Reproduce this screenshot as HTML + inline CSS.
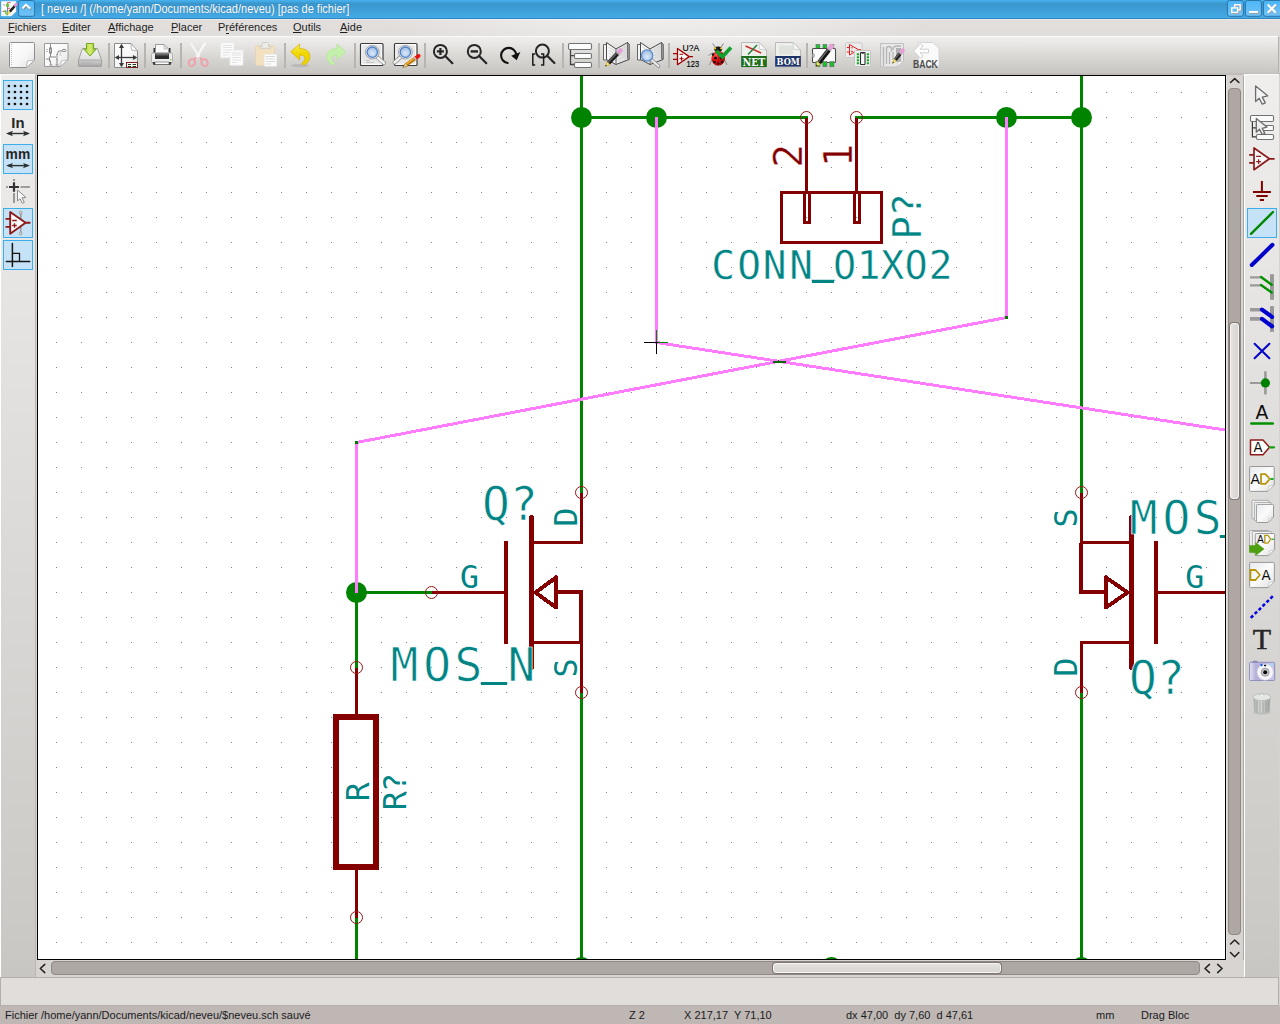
<!DOCTYPE html>
<html><head><meta charset="utf-8"><title>neveu - Eeschema</title>
<style>
html,body{margin:0;padding:0;}
body{width:1280px;height:1024px;overflow:hidden;position:relative;background:#d6d2cf;font-family:"Liberation Sans",sans-serif;font-size:11px;color:#1b1b1b;}
.abs{position:absolute;}
#title{left:0;top:0;width:1280px;height:19px;background:linear-gradient(#48b2f0 0,#42a8e2 1.5px,#3a97cd 3.5px,#3b98cf 5px,#44a9e5 17.5px,#44a9e5 18px,#2a88c4 18px,#2a88c4 19px);}
#title .txt{position:absolute;left:41px;top:2px;font-size:12px;color:#fff;white-space:nowrap;line-height:14px;text-shadow:0 0 1px rgba(30,80,120,.6);transform:scaleX(0.917);transform-origin:0 0;}
#menu{left:0;top:19px;width:1280px;height:17px;background:radial-gradient(ellipse 290px 50px at 655px -9px,rgba(255,255,255,.52) 0,rgba(255,255,255,.4) 40%,rgba(255,255,255,0) 100%),linear-gradient(#efe7e3 0,#efe7e3 1px,#e1dedc 1px,#e0dddb 100%);}
#menu span{position:absolute;top:2px;font-size:11px;line-height:13px;color:#1d1d1d;white-space:nowrap;}
#menu span.fl::first-letter{text-decoration:underline;text-underline-offset:1px;}
#tb{left:0;top:36px;width:1279px;height:37px;border-right:1px solid #b4b1ae;border-top:1px solid #fafaf9;box-sizing:border-box;background:linear-gradient(#efeeec 0,#ebeae8 4px,#d9d7d4 20px,#c8c6c3 36px);}
#tbline{left:0;top:73px;width:1280px;height:2px;background:#bfbcb9;}
#ltb{left:0;top:74px;width:36px;height:903px;border-top:1px solid #fbfbfa;border-right:1px solid #b9b6b3;background:linear-gradient(#efeeec 0,#e3e1df 300px,#cbc9c6 860px,#c8c6c3 100%);border-left:1px solid #fff;box-sizing:border-box;}
#rtb{left:1244px;top:74px;width:35px;height:903px;border-top:1px solid #fbfbfa;background:linear-gradient(#efeeec 0,#e3e1df 300px,#cbc9c6 860px,#c8c6c3 100%);border-left:1px solid #fff;box-sizing:border-box;}
#canvas{left:37px;top:75px;width:1187px;height:883px;border:1px solid #000;background:#fff;}
#vsb{left:1226px;top:76px;width:18px;height:884px;background:#d8d4d1;border-right:1px solid #aaa7a4;border-left:1px solid #e4e0dd;box-sizing:border-box;}
#hsb{left:38px;top:960px;width:1206px;height:17px;background:#d8d4d1;}
.groove{position:absolute;background:#afa7a3;border:1px solid #8f8884;border-radius:4px;box-sizing:border-box;}
.handle{position:absolute;background:linear-gradient(90deg,#e4e1de,#d8d4d1);border:1px solid #f6f5f4;border-radius:3px;box-sizing:border-box;box-shadow:0 0 0 1px #7d7773;}
#msg{left:0;top:977px;width:1279px;height:29px;background:#e0dddb;border:1px solid #b3afac;box-sizing:border-box;}
#status{left:0;top:1006px;width:1280px;height:18px;background:#beb7b3;}
#status span{position:absolute;top:3px;font-size:11px;line-height:13px;color:#1a1a22;white-space:nowrap;}
</style></head><body>
<div id="title" class="abs"><div class="txt">[ neveu /] (/home/yann/Documents/kicad/neveu) [pas de fichier]</div></div>
<div id="menu" class="abs">
<span class="fl" style="left:8px">Fichiers</span>
<span class="fl" style="left:62px">Editer</span>
<span class="fl" style="left:108px">Affichage</span>
<span class="fl" style="left:171px">Placer</span>
<span style="left:218px">Préférences</span><i style="position:absolute;left:225.5px;top:13.5px;width:3.6px;height:1px;background:#1d1d1d"></i>
<span class="fl" style="left:293px">Outils</span>
<span class="fl" style="left:340px">Aide</span>
</div>
<div id="tb" class="abs"></div>
<div id="tbline" class="abs"></div>
<div id="ltb" class="abs"></div>
<div id="rtb" class="abs"></div>
<div id="canvas" class="abs"></div>
<div id="vsb" class="abs">
 <div class="groove" style="left:1px;top:12px;width:13px;height:847px"></div>
 <div class="handle" style="left:3px;top:247px;width:9px;height:176px"></div>
</div>
<div id="hsb" class="abs">
 <div class="groove" style="left:13px;top:1px;width:1149px;height:14px"></div>
 <div class="handle" style="left:735px;top:3px;width:228px;height:10px;background:linear-gradient(#e4e1de,#d8d4d1)"></div>
</div>
<div id="msg" class="abs"></div>
<div id="status" class="abs">
<span style="left:5px">Fichier /home/yann/Documents/kicad/neveu/$neveu.sch sauvé</span>
<span style="left:629px">Z 2</span>
<span style="left:684px">X 217,17&nbsp; Y 71,10</span>
<span style="left:846px">dx 47,00&nbsp; dy 7,60&nbsp; d 47,61</span>
<span style="left:1096px">mm</span>
<span style="left:1141px">Drag Bloc</span>
</div>
<svg class="abs" style="left:38px;top:76px" width="1187" height="883" viewBox="38 76 1187 883">
<defs><pattern id="grid" x="6" y="17" width="25" height="25" patternUnits="userSpaceOnUse"><rect x="0" y="0" width="1" height="1" fill="#848484"/></pattern></defs>
<rect x="38" y="76" width="1187" height="883" fill="url(#grid)"/>
<g transform="translate(0.5,0.5)" fill="none" stroke-linecap="butt" shape-rendering="crispEdges">
<line x1="581" y1="70" x2="581" y2="492" stroke="#008400" stroke-width="3" stroke-linecap="butt" />
<line x1="581" y1="692" x2="581" y2="965" stroke="#008400" stroke-width="3" stroke-linecap="butt" />
<line x1="1081" y1="70" x2="1081" y2="492" stroke="#008400" stroke-width="3" stroke-linecap="butt" />
<line x1="1081" y1="692" x2="1081" y2="965" stroke="#008400" stroke-width="3" stroke-linecap="butt" />
<line x1="581" y1="117" x2="807.5" y2="117" stroke="#008400" stroke-width="3" stroke-linecap="butt" />
<line x1="854.5" y1="117" x2="1081" y2="117" stroke="#008400" stroke-width="3" stroke-linecap="butt" />
<line x1="356" y1="592" x2="431" y2="592" stroke="#008400" stroke-width="3" stroke-linecap="butt" />
<line x1="356" y1="592" x2="356" y2="667" stroke="#008400" stroke-width="3" stroke-linecap="butt" />
<line x1="356" y1="917" x2="356" y2="965" stroke="#008400" stroke-width="3" stroke-linecap="butt" />
<circle cx="581" cy="117" r="10.5" fill="#008400" stroke="none" shape-rendering="auto"/>
<circle cx="656" cy="117" r="10.5" fill="#008400" stroke="none" shape-rendering="auto"/>
<circle cx="1006" cy="117" r="10.5" fill="#008400" stroke="none" shape-rendering="auto"/>
<circle cx="1081" cy="117" r="10.5" fill="#008400" stroke="none" shape-rendering="auto"/>
<circle cx="356" cy="592" r="10.5" fill="#008400" stroke="none" shape-rendering="auto"/>
<circle cx="831" cy="967" r="10.5" fill="#008400" stroke="none" shape-rendering="auto"/>
<circle cx="581" cy="967" r="10.5" fill="#008400" stroke="none" shape-rendering="auto"/>
<circle cx="1081" cy="967" r="10.5" fill="#008400" stroke="none" shape-rendering="auto"/>
<line x1="806" y1="117" x2="806" y2="192" stroke="#840000" stroke-width="3" stroke-linecap="butt" />
<line x1="856" y1="117" x2="856" y2="192" stroke="#840000" stroke-width="3" stroke-linecap="butt" />
<rect x="781" y="192" width="100" height="50" stroke="#840000" stroke-width="3"/>
<rect x="804" y="192" width="5" height="30" stroke="#840000" stroke-width="3"/>
<rect x="854" y="192" width="5" height="30" stroke="#840000" stroke-width="3"/>
<circle cx="806" cy="117" r="6" stroke="#961414" stroke-width="1" shape-rendering="auto"/>
<circle cx="856" cy="117" r="6" stroke="#961414" stroke-width="1" shape-rendering="auto"/>
<line x1="531" y1="517" x2="531" y2="667" stroke="#840000" stroke-width="5" stroke-linecap="round" />
<line x1="505.5" y1="542" x2="505.5" y2="642" stroke="#840000" stroke-width="4" stroke-linecap="round" />
<line x1="506" y1="592" x2="431" y2="592" stroke="#840000" stroke-width="3" stroke-linecap="butt" />
<path d="M581 492 L581 542 L531 542" stroke="#840000" stroke-width="3" stroke-linejoin="miter" stroke-linecap="butt"/>
<path d="M531 642 L581 642 L581 692" stroke="#840000" stroke-width="3" stroke-linejoin="miter" stroke-linecap="butt"/>
<circle cx="581" cy="492" r="6" stroke="#961414" stroke-width="1" shape-rendering="auto"/>
<circle cx="581" cy="692" r="6" stroke="#961414" stroke-width="1" shape-rendering="auto"/>
<line x1="556" y1="591.5" x2="582.5" y2="591.5" stroke="#840000" stroke-width="4" stroke-linecap="butt" />
<line x1="580.5" y1="589.5" x2="580.5" y2="642" stroke="#840000" stroke-width="4" stroke-linecap="butt" />
<path d="M535 592 L555.5 577 L555.5 607 Z" stroke="#840000" stroke-width="4" stroke-linejoin="round" stroke-linecap="butt"/>
<circle cx="431" cy="592" r="6" stroke="#961414" stroke-width="1" shape-rendering="auto"/>
<line x1="1131" y1="517" x2="1131" y2="667" stroke="#840000" stroke-width="5" stroke-linecap="round" />
<line x1="1155.5" y1="542" x2="1155.5" y2="642" stroke="#840000" stroke-width="4" stroke-linecap="round" />
<line x1="1156" y1="592" x2="1240" y2="592" stroke="#840000" stroke-width="3" stroke-linecap="butt" />
<path d="M1081 492 L1081 542 L1131 542" stroke="#840000" stroke-width="3" stroke-linejoin="miter" stroke-linecap="butt"/>
<path d="M1131 642 L1081 642 L1081 692" stroke="#840000" stroke-width="3" stroke-linejoin="miter" stroke-linecap="butt"/>
<circle cx="1081" cy="492" r="6" stroke="#961414" stroke-width="1" shape-rendering="auto"/>
<circle cx="1081" cy="692" r="6" stroke="#961414" stroke-width="1" shape-rendering="auto"/>
<line x1="1106" y1="591.5" x2="1078.5" y2="591.5" stroke="#840000" stroke-width="4" stroke-linecap="butt" />
<line x1="1080.5" y1="593.5" x2="1080.5" y2="542" stroke="#840000" stroke-width="4" stroke-linecap="butt" />
<path d="M1127 592 L1105.5 577 L1105.5 607 Z" stroke="#840000" stroke-width="4" stroke-linejoin="round" stroke-linecap="butt"/>
<line x1="356" y1="667" x2="356" y2="717" stroke="#840000" stroke-width="3" stroke-linecap="butt" />
<line x1="356" y1="867" x2="356" y2="917" stroke="#840000" stroke-width="3" stroke-linecap="butt" />
<rect x="335.5" y="716.5" width="40" height="150" stroke="#840000" stroke-width="6"/>
<circle cx="356" cy="667" r="6" stroke="#961414" stroke-width="1" shape-rendering="auto"/>
<circle cx="356" cy="917" r="6" stroke="#961414" stroke-width="1" shape-rendering="auto"/>
<path d="M656 116 L656 342 L1306 442" stroke="#ff7bff" stroke-width="3" stroke-linejoin="miter" stroke-linecap="butt"/>
<path d="M1006 116 L1006 317 L356 442 L356 592" stroke="#ff7bff" stroke-width="3" stroke-linejoin="miter" stroke-linecap="butt"/>
<rect x="354.5" y="440.5" width="3" height="3" fill="#007c00" stroke="none"/>
<rect x="1004.5" y="315.5" width="3" height="3" fill="#007c00" stroke="none"/>
<line x1="772" y1="361" x2="785" y2="361" stroke="#0a6a0a" stroke-width="2" stroke-linecap="butt" />
<line x1="778" y1="359.5" x2="778" y2="362.5" stroke="#0a6a0a" stroke-width="1" stroke-linecap="butt" />
<line x1="643.5" y1="342" x2="667.5" y2="342" stroke="#000" stroke-width="1" stroke-linecap="butt" />
<line x1="656" y1="329.5" x2="656" y2="353.5" stroke="#000" stroke-width="1" stroke-linecap="butt" />
<line x1="656" y1="329.5" x2="656" y2="341" stroke="#008400" stroke-width="1" stroke-linecap="butt" />
<line x1="657" y1="342" x2="667.5" y2="342" stroke="#008400" stroke-width="1" stroke-linecap="butt" />
</g>
<text x="723 749 774.6 801 823 844.7 868.6 892.4 916 940.5" y="278.8 278.8 278.8 278.8 272.3 278.8 278.8 278.8 278.8 278.8" font-family="'DejaVu Sans Mono','Liberation Mono',monospace" font-size="39.4" fill="#008484" stroke="#fff" stroke-width="0.4" paint-order="fill" text-anchor="middle">CONN_01X02</text>
<text transform="translate(921.3,0) rotate(-90)" x="-227.8 -205" y="0 0" font-family="'DejaVu Sans Mono','Liberation Mono',monospace" font-size="39.4" fill="#008484" stroke="#fff" stroke-width="0.4" paint-order="fill" text-anchor="middle">P?</text>
<text transform="translate(802.3,0) rotate(-90)" x="-156" y="0" font-family="'DejaVu Sans Mono','Liberation Mono',monospace" font-size="39.4" fill="#840000" stroke="#fff" stroke-width="0.4" paint-order="fill" text-anchor="middle">2</text>
<text transform="translate(852.3,0) rotate(-90)" x="-155.5" y="0" font-family="'DejaVu Sans Mono','Liberation Mono',monospace" font-size="39.4" fill="#840000" stroke="#fff" stroke-width="0.4" paint-order="fill" text-anchor="middle">1</text>
<text x="496 524" y="520.4 520.4" font-family="'DejaVu Sans Mono','Liberation Mono',monospace" font-size="46.1" fill="#008484" stroke="#fff" stroke-width="0.7" paint-order="fill" text-anchor="middle">Q?</text>
<text x="404.4 437.2 468.4 494 521.4" y="681.4 681.4 681.4 672.9 681.4" font-family="'DejaVu Sans Mono','Liberation Mono',monospace" font-size="46.1" fill="#008484" stroke="#fff" stroke-width="0.7" paint-order="fill" text-anchor="middle">MOS_N</text>
<text x="469.5" y="587.5" font-family="'DejaVu Sans Mono','Liberation Mono',monospace" font-size="31.5" fill="#008484" text-anchor="middle">G</text>
<text transform="translate(577,0) rotate(-90)" x="-517" y="0" font-family="'DejaVu Sans Mono','Liberation Mono',monospace" font-size="31.5" fill="#008484" text-anchor="middle">D</text>
<text transform="translate(577,0) rotate(-90)" x="-668" y="0" font-family="'DejaVu Sans Mono','Liberation Mono',monospace" font-size="31.5" fill="#008484" text-anchor="middle">S</text>
<text x="1143.6 1176.4 1207.6 1233 1260.6" y="534.4 534.4 534.4 526.4 534.4" font-family="'DejaVu Sans Mono','Liberation Mono',monospace" font-size="46.1" fill="#008484" stroke="#fff" stroke-width="0.7" paint-order="fill" text-anchor="middle">MOS_N</text>
<text x="1143 1171" y="694.4 694.4" font-family="'DejaVu Sans Mono','Liberation Mono',monospace" font-size="46.1" fill="#008484" stroke="#fff" stroke-width="0.7" paint-order="fill" text-anchor="middle">Q?</text>
<text x="1194.75" y="587.5" font-family="'DejaVu Sans Mono','Liberation Mono',monospace" font-size="31.5" fill="#008484" text-anchor="middle">G</text>
<text transform="translate(1077,0) rotate(-90)" x="-518" y="0" font-family="'DejaVu Sans Mono','Liberation Mono',monospace" font-size="31.5" fill="#008484" text-anchor="middle">S</text>
<text transform="translate(1077,0) rotate(-90)" x="-667" y="0" font-family="'DejaVu Sans Mono','Liberation Mono',monospace" font-size="31.5" fill="#008484" text-anchor="middle">D</text>
<text transform="translate(369,0) rotate(-90)" x="-791.75" y="0" font-family="'DejaVu Sans Mono','Liberation Mono',monospace" font-size="31.5" fill="#008484" text-anchor="middle">R</text>
<text transform="translate(406,0) rotate(-90)" x="-800.75 -782.4" y="0 0" font-family="'DejaVu Sans Mono','Liberation Mono',monospace" font-size="31.5" fill="#008484" text-anchor="middle">R?</text>
<g shape-rendering="crispEdges" stroke="#008484" stroke-width="3"><line x1="812" y1="281" x2="834" y2="281"/><line x1="481" y1="683" x2="507" y2="683"/><line x1="1220" y1="536" x2="1246" y2="536"/></g>
<ellipse cx="844.7" cy="264.8" rx="3.6" ry="8" fill="#fff"/><ellipse cx="916" cy="264.8" rx="3.6" ry="8" fill="#fff"/>
</svg>
<svg class="abs" style="left:0;top:36px" width="1280" height="38" viewBox="0 36 1280 38">
<defs>
<linearGradient id="pg" x1="0" y1="0" x2="1" y2="1"><stop offset="0" stop-color="#ffffff"/><stop offset="0.6" stop-color="#f6f6f6"/><stop offset="1" stop-color="#dcdcdc"/></linearGradient>
<linearGradient id="arrg" x1="0" y1="0" x2="1" y2="0"><stop offset="0" stop-color="#9ccc3a"/><stop offset="0.5" stop-color="#dcec70"/><stop offset="1" stop-color="#8cc030"/></linearGradient>
<linearGradient id="drv" x1="0" y1="0" x2="0" y2="1"><stop offset="0" stop-color="#f4f4f4"/><stop offset="1" stop-color="#d4d4d4"/></linearGradient>
<linearGradient id="drvf" x1="0" y1="0" x2="0" y2="1"><stop offset="0" stop-color="#d0d0d0"/><stop offset="1" stop-color="#a8a8a8"/></linearGradient>
<radialGradient id="lens" cx="0.5" cy="0.6" r="0.6"><stop offset="0" stop-color="#dce8f6"/><stop offset="1" stop-color="#9cbce4"/></radialGradient>
<linearGradient id="yel" x1="0" y1="0" x2="0" y2="1"><stop offset="0" stop-color="#f8ec60"/><stop offset="0.45" stop-color="#f0d800"/><stop offset="1" stop-color="#ecd000"/></linearGradient>
<radialGradient id="bug" cx="0.35" cy="0.3" r="0.8"><stop offset="0" stop-color="#ff5a50"/><stop offset="0.5" stop-color="#e01010"/><stop offset="1" stop-color="#a00000"/></radialGradient>
<linearGradient id="book" x1="0" y1="0" x2="1" y2="0"><stop offset="0" stop-color="#fafafa"/><stop offset="1" stop-color="#d8d8d8"/></linearGradient>
</defs>
<rect x="108" y="43" width="2" height="25" fill="#b7b4b1"/>
<rect x="144" y="43" width="2" height="25" fill="#b7b4b1"/>
<rect x="180" y="43" width="2" height="25" fill="#b7b4b1"/>
<rect x="284" y="43" width="2" height="25" fill="#b7b4b1"/>
<rect x="354" y="43" width="2" height="25" fill="#b7b4b1"/>
<rect x="424" y="43" width="2" height="25" fill="#b7b4b1"/>
<rect x="562" y="43" width="2" height="25" fill="#b7b4b1"/>
<rect x="598" y="43" width="2" height="25" fill="#b7b4b1"/>
<rect x="668" y="43" width="2" height="25" fill="#b7b4b1"/>
<rect x="806" y="43" width="2" height="25" fill="#b7b4b1"/>
<path d="M10.5 42.5 H33.5 Q34.5 42.5 34.5 43.5 V60 L26.5 67.5 H10.5 Q9.5 67.5 9.5 66.5 V43.5 Q9.5 42.5 10.5 42.5 Z" fill="url(#pg)" stroke="#8e8e8e" stroke-width="1"/>
<path d="M34.5 60 L26.5 67.5 L27.5 61 Z" fill="#fff" stroke="#a8a8a8" stroke-width="0.8"/>
<line x1="11.5" y1="44" x2="11.5" y2="66" stroke="#c4c4c4" stroke-width="1" stroke-dasharray="1 1"/>
<path d="M44.5 43.5 H68 V60 L60 66.5 H44.5 Z" fill="url(#pg)" stroke="#9a9a9a" stroke-width="1"/>
<path d="M68 60 L60 66.5 L61.5 61 Z" fill="#fff" stroke="#b0b0b0" stroke-width="0.8"/>
<g stroke="#8a8a8a" stroke-width="1" fill="none"><path d="M50.5 44 V48 M50.5 53 V57 M50.5 57 H56 M57 54 V60 M57 55 L58.5 51 H62 M57 59 V65 M55.5 65 H58.5 M46 59 H49 M49.5 56.5 V61.5 M50 60 L51 65 M49.5 65 H52.5"/><rect x="49.5" y="48" width="2" height="5" fill="#c8c8c8"/><ellipse cx="64" cy="50.5" rx="2" ry="1.2" fill="#eee"/><path d="M46 49.5 H48 M46 51.5 H48 M59.5 53 H61.5 M59.5 55 H61.5" stroke="#b8b8b8"/></g>
<path d="M82.5 48.5 H97.5 L101.5 60 V66 H78.5 V60 Z" fill="url(#drv)" stroke="#a0a0a0" stroke-width="1"/>
<rect x="78.5" y="60" width="23" height="6.3" rx="1" fill="url(#drvf)" stroke="#9a9a9a" stroke-width="0.8"/>
<rect x="81" y="62" width="12" height="2" fill="#b8b8b8"/>
<path d="M86.5 43.5 H93.5 V49 H96.3 L90 56 L83.7 49 H86.5 Z" fill="url(#arrg)" stroke="#6ea820" stroke-width="1" stroke-linejoin="round"/>
<path d="M114.5 43.5 H131 L137.5 51 V67.5 H114.5 Z" fill="url(#pg)" stroke="#8a8a8a" stroke-width="1"/>
<path d="M131 43.5 L137.5 51 L131.5 50 Z" fill="#fff" stroke="#a8a8a8" stroke-width="0.8"/>
<g stroke="#3a3a3a" stroke-width="1.3" fill="#3a3a3a"><line x1="121.5" y1="45" x2="121.5" y2="66"/><line x1="116" y1="57.5" x2="136" y2="57.5"/></g>
<g fill="#3a3a3a"><path d="M121.5 43.8 L119 48 H124 Z"/><path d="M121.5 67.2 L119 63 H124 Z"/><path d="M114.8 57.5 L119 55 V60 Z"/><path d="M137.2 57.5 L133 55 V60 Z"/></g>
<rect x="126.5" y="62.5" width="11" height="5" fill="#fff" stroke="#7a2020" stroke-width="1"/><path d="M128 64.5 H131 M132.500 64.5 H136 M128 66.5 H131 M132.5 66.5 H136" stroke="#1a3a1a" stroke-width="1"/>
<path d="M155.500 53 V44.500 H164 L168.500 49 V53 Z" fill="#f8f8f8" stroke="#9a9a9a" stroke-width="1"/>
<path d="M164 44.500 L168.500 49 H164 Z" fill="#e4e4e4" stroke="#a8a8a8" stroke-width="0.6"/>
<rect x="153.5" y="48" width="1.500" height="5" fill="#333"/><rect x="169" y="48" width="1.500" height="5" fill="#333"/>
<rect x="151.5" y="53" width="21" height="10" rx="1.500" fill="#ececec" stroke="#b0b0b0" stroke-width="1"/>
<rect x="155" y="53.5" width="14" height="5.500" fill="#2c2c2c"/><rect x="155.5" y="54" width="13" height="1.500" fill="#666"/>
<path d="M152.500 62 H171.500 L170.5 65 H153.5 Z" fill="#3a3a3a"/><rect x="155" y="62" width="14" height="2.500" fill="#fafafa" stroke="#555" stroke-width="0.6"/>
<rect x="170" y="59" width="1.200" height="1.200" fill="#70d030"/>
<g opacity="0.95"><path d="M191 43.500 L199.500 57" stroke="#f4f4f4" stroke-width="2.600" stroke-linecap="round"/><path d="M205 43.500 L196.500 57" stroke="#f8f8f8" stroke-width="2.600" stroke-linecap="round"/>
<path d="M196.300 57 L194 60" stroke="#f0a0a8" stroke-width="2"/><path d="M199.700 57 L202 60" stroke="#f0a0a8" stroke-width="2"/>
<ellipse cx="191.800" cy="62.600" rx="3" ry="3.600" transform="rotate(35 191.800 62.600)" fill="none" stroke="#f0a0a8" stroke-width="2"/><ellipse cx="204.500" cy="62.600" rx="3" ry="3.600" transform="rotate(-35 204.500 62.600)" fill="none" stroke="#f0a0a8" stroke-width="2"/></g>
<g><rect x="220.800" y="42.800" width="13.200" height="15" fill="#fbfbfb" stroke="#e9e9e9" stroke-width="0.8"/><path d="M223 45.500 H232 M223 47.500 H232 M223 50 H232 M223 52.500 H232 M223 55 H228" stroke="#e2e2e2" stroke-width="1.200"/>
<rect x="230" y="50.200" width="13" height="15" fill="#fbfbfb" stroke="#eaeaea" stroke-width="0.8"/><path d="M232 53 H241 M232 55 H241 M232 57.500 H241 M232 60 H241 M232 62.500 H237" stroke="#e2e2e2" stroke-width="1.200"/></g>
<rect x="255.500" y="45.800" width="19" height="19.600" rx="1.500" fill="#f2e0c0" stroke="#e6d2ae" stroke-width="0.8"/>
<path d="M260 48.300 V46.500 H262 V43.500 Q262 42.500 263 42.500 H267.500 Q268.500 42.500 268.500 43.500 V46.500 H270.500 V48.300 Z" fill="#ececea" stroke="#c8c8c4" stroke-width="0.8"/>
<rect x="264.200" y="54.200" width="12.600" height="12" fill="#fcfcfc" stroke="#e6e6e6" stroke-width="0.6"/><path d="M265.500 56.500 H275 M265.500 59 H275 M265.500 61.500 H275 M265.500 64 H271" stroke="#d8d8d8" stroke-width="1.100"/>
<ellipse cx="300" cy="65.500" rx="9" ry="1.800" fill="#000" opacity="0.10"/>
<path d="M290.800 51.700 L299.600 44 V48.600 C306.500 48.600 309.800 52 309.800 56.500 C309.800 60.500 307 64 303.200 65 C302.200 64.500 301.800 63.500 302.200 62.800 C304 61.500 305 60 305 58.500 C305 56 303 55 299.600 55 V59.900 Z" fill="url(#yel)" stroke="#d8b400" stroke-width="0.8" stroke-linejoin="round"/>
<path d="M345.800 51.700 L337 44 V48.600 C330.100 48.600 326.800 52 326.800 56.500 C326.800 60.500 329.600 64 333.400 65 C334.400 64.500 334.800 63.500 334.400 62.800 C332.600 61.500 331.600 60 331.600 58.500 C331.600 56 333.600 55 337 55 V59.900 Z" fill="#c4f0ac" stroke="#b4e49c" stroke-width="0.8" stroke-linejoin="round"/>
<rect x="360.5" y="43.500" width="22.500" height="22" rx="1" fill="#fff" stroke="#3c3c3c" stroke-width="1.200"/><rect x="362.3" y="45.300" width="19" height="18.400" fill="#e6e6e6"/>
<path d="M366 60.500 H370 M366 62.500 H374" stroke="#b8b8b8" stroke-width="0.8"/>
<path d="M377 57 L384 63" stroke="#909090" stroke-width="4" stroke-linecap="round"/><path d="M377.500 57.500 L384 63" stroke="#f2f2f2" stroke-width="2.400" stroke-linecap="round"/>
<circle cx="372.300" cy="52.200" r="6.800" fill="#fafafa" stroke="#8a8a8a" stroke-width="0.8"/><circle cx="372.300" cy="52.200" r="5.200" fill="url(#lens)" stroke="#4a7ec8" stroke-width="1.300"/>
<rect x="394.5" y="43.500" width="22.500" height="22" rx="1" fill="#fff" stroke="#3c3c3c" stroke-width="1.200"/><rect x="396.3" y="45.300" width="19" height="18.400" fill="#e6e6e6"/>
<path d="M400.500 57 L394.500 62.500" stroke="#909090" stroke-width="4" stroke-linecap="round"/><path d="M400.200 57.300 L394.500 62.500" stroke="#f2f2f2" stroke-width="2.400" stroke-linecap="round"/>
<circle cx="405.400" cy="52.200" r="6.800" fill="#fafafa" stroke="#8a8a8a" stroke-width="0.8"/><circle cx="405.400" cy="52.200" r="5.200" fill="url(#lens)" stroke="#4a7ec8" stroke-width="1.300"/>
<path d="M418 56.500 L404.500 66" stroke="#b87810" stroke-width="3.400" stroke-linecap="butt"/><path d="M417.600 56 L404.300 65.300" stroke="#e8a830" stroke-width="1.600"/>
<path d="M418.800 55.800 L416 57.800" stroke="#e81010" stroke-width="3.600" stroke-linecap="round"/><path d="M415.800 58 L414.600 58.800" stroke="#c0c0c0" stroke-width="3.400"/>
<path d="M405.800 63.300 L402.600 67.600 L407.700 66.100 Z" fill="#e8d8a0" stroke="#a07820" stroke-width="0.5"/><path d="M402.600 67.600 L404 66.500 L403.400 66 Z" fill="#333"/>
<circle cx="440.4" cy="51.4" r="6.5" fill="none" stroke="#262626" stroke-width="2"/><path d="M445.2 56.0 L452.4 63.2" stroke="#262626" stroke-width="2.200" stroke-linecap="round"/>
<path d="M436.900 51.400 H443.900 M440.400 47.900 V54.900" stroke="#262626" stroke-width="2.200"/>
<circle cx="474.3" cy="51.4" r="6.5" fill="none" stroke="#262626" stroke-width="2"/><path d="M479.1 56.0 L486.3 63.2" stroke="#262626" stroke-width="2.200" stroke-linecap="round"/>
<path d="M470.600 51.400 H478 " stroke="#262626" stroke-width="2.400"/>
<path d="M507.600 63 A7.600 7.600 0 1 1 516.300 55" fill="none" stroke="#111" stroke-width="2.100" stroke-linecap="round"/><path d="M511.200 55.700 L520.300 52 L516.700 60.200 Z" fill="#111"/>
<circle cx="542.4" cy="51.1" r="6.5" fill="none" stroke="#262626" stroke-width="2"/><path d="M547.1999999999999 55.7 L554.4 63.0" stroke="#262626" stroke-width="2.200" stroke-linecap="round"/>
<path d="M535.200 54 H532.800 V65 H535.200 M541 54 H543.600 V65 H541" fill="none" stroke="#1c1c1c" stroke-width="1.500"/>
<path d="M570.500 49.500 V64.500 H574 M570.500 55.700 H574" fill="none" stroke="#444" stroke-width="1.300"/>
<rect x="568.5" y="43.5" width="23" height="6" rx="1.200" fill="#fcfcfc" stroke="#727272" stroke-width="1.100"/>
<rect x="574.5" y="53.5" width="17" height="5" rx="1.200" fill="#fcfcfc" stroke="#727272" stroke-width="1.100"/>
<rect x="574.5" y="62.5" width="17" height="5" rx="1.200" fill="#fcfcfc" stroke="#727272" stroke-width="1.100"/>
<path d="M603.5 44.500 H607 V60 H603.5 Z" fill="#f4f4f4" stroke="#555" stroke-width="0.9"/>
<path d="M606.5 42.500 L616 49 L627.5 42.500 L629 44 V59.500 L616 64.500 L606.5 59.500 Z" fill="url(#book)" stroke="#4a4a4a" stroke-width="1"/>
<path d="M616 49 V64.500" stroke="#555" stroke-width="0.9"/>
<path d="M608.5 47 L614.5 51 M608.5 50 L614.5 54 M608.5 53 L614.5 57 M608.5 56 L614.5 60 M617.5 51 L626 46.500 M617.5 54 L626 49.500 M617.5 57 L626 52.500 M617.5 60 L626 55.500" stroke="#cfcfcf" stroke-width="0.8"/>
<path d="M627.5 42.500 L629 44 V59.500 L627.5 58.500 Z" fill="#b8b8b8" stroke="#4a4a4a" stroke-width="0.7"/>
<path d="M620.5 50.5 L618.3 52.8" stroke="#e8a0d8" stroke-width="4.6000000000000005" stroke-linecap="round"/>
<path d="M618.3 52.8 L617.3 53.8" stroke="#b0b0b0" stroke-width="4.2"/>
<path d="M617.3 53.8 L608.4 63.1" stroke="#1e1e1e" stroke-width="4.2"/>
<path d="M616.7 53.2 L607.8 62.6" stroke="#6a6a6a" stroke-width="1.4"/>
<path d="M606.9 61.7 L605.3 66.4 L609.9 64.6 Z" fill="#f0e080" stroke="#b8a020" stroke-width="0.5"/>
<path d="M605.9 64.7 L605.3 66.4 L606.9 65.8 Z" fill="#111"/>
<path d="M637.5 44.500 H641 V60 H637.5 Z" fill="#f4f4f4" stroke="#555" stroke-width="0.9"/>
<path d="M640.5 42.500 L650 49 L661.5 42.500 L663 44 V59.500 L650 64.500 L640.5 59.500 Z" fill="url(#book)" stroke="#4a4a4a" stroke-width="1"/>
<path d="M650 49 V64.500" stroke="#555" stroke-width="0.9"/>
<path d="M642.5 47 L648.5 51 M642.5 50 L648.5 54 M642.5 53 L648.5 57 M642.5 56 L648.5 60 M651.5 51 L660 46.500 M651.5 54 L660 49.500 M651.5 57 L660 52.500 M651.5 60 L660 55.500" stroke="#cfcfcf" stroke-width="0.8"/>
<path d="M661.5 42.500 L663 44 V59.500 L661.5 58.500 Z" fill="#b8b8b8" stroke="#4a4a4a" stroke-width="0.7"/>
<path d="M651 59.500 L658.500 66" stroke="#8a8a8a" stroke-width="3.600" stroke-linecap="round"/><path d="M651.500 60 L658.500 66" stroke="#ececec" stroke-width="2" stroke-linecap="round"/>
<circle cx="647.100" cy="55.500" r="5.600" fill="url(#lens)" stroke="#5a8cd0" stroke-width="1.300"/>
<path d="M677.500 48.500 V64.700 L689.200 56.600 Z" fill="#f6f6f6" stroke="#a00000" stroke-width="1.300" stroke-linejoin="round"/><path d="M673 53.600 H677.500 M673 59.300 H677.500 M689.200 56.600 H693" stroke="#a00000" stroke-width="1.200"/><path d="M679.500 54.300 H683 M679.500 58.700 H683.500 M681.500 56.700 V60.700" stroke="#a00000" stroke-width="1"/>
<text x="682.400" y="50.800" font-family="'Liberation Sans',sans-serif" font-size="9.800" fill="#000" stroke="#000" stroke-width="0.150" textLength="16.800" lengthAdjust="spacingAndGlyphs">U?A</text>
<text x="686.600" y="66.700" font-family="'Liberation Sans',sans-serif" font-size="9.600" fill="#000" stroke="#000" stroke-width="0.150" textLength="12.600" lengthAdjust="spacingAndGlyphs">123</text>
<g stroke="#8a8a8a" stroke-width="1" fill="none"><path d="M712.500 53 L708.500 55.500 M711.500 60 L709.500 65 M723.500 53 L727.500 55 M724.500 60 L727 65"/><path d="M716 48 L712.500 43.500 M720.500 48 L723.500 43.500" stroke="#6a6a6a" stroke-width="0.8"/></g>
<ellipse cx="718.200" cy="49" rx="4" ry="2.600" fill="#181818"/><circle cx="715.200" cy="48.300" r="1.100" fill="#f0d020"/><circle cx="721.200" cy="48.300" r="1.100" fill="#f0d020"/>
<ellipse cx="718.200" cy="58.200" rx="6.800" ry="7.400" fill="url(#bug)"/><path d="M718.200 51 V65.500" stroke="#700" stroke-width="0.600"/>
<circle cx="713" cy="54.5" r="1.2" fill="#141414"/>
<circle cx="715.5" cy="58" r="1.5" fill="#141414"/>
<circle cx="714.5" cy="62" r="1.3" fill="#141414"/>
<circle cx="721" cy="58" r="1.5" fill="#141414"/>
<circle cx="722" cy="62" r="1.3" fill="#141414"/>
<circle cx="718.2" cy="63.5" r="1.1" fill="#141414"/>
<circle cx="723" cy="54.5" r="1.1" fill="#141414"/>
<path d="M716.300 50.800 L722.300 56.800 L731 47.500" fill="none" stroke="#10a030" stroke-width="3.600" stroke-linejoin="miter"/>
<path d="M741.5 42.500 H759 L766.5 50 V67 H741.5 Z" fill="#eef0ec" stroke="#b4b4b4" stroke-width="0.9"/>
<path d="M759 42.500 L766.5 50 L759.5 49 Z" fill="#fafafa" stroke="#c0c0c0" stroke-width="0.7"/>
<rect x="741.2" y="56" width="25.6" height="11" fill="#1e6e1e"/>
<text x="742.8" y="65.9" font-family="'DejaVu Serif','Liberation Serif',serif" font-weight="bold" font-size="10.9" fill="#fff" textLength="22.5" lengthAdjust="spacingAndGlyphs">NET</text>
<path d="M745.500 46 L761.200 53" stroke="#c83030" stroke-width="1.500"/><path d="M757 45 L748 54.500" stroke="#208040" stroke-width="1.500"/>
<path d="M775.5 42.500 H793 L800.5 50 V67 H775.5 Z" fill="#eef0ec" stroke="#b4b4b4" stroke-width="0.9"/>
<path d="M793 42.500 L800.5 50 L793.5 49 Z" fill="#fafafa" stroke="#c0c0c0" stroke-width="0.7"/>
<rect x="775.2" y="56" width="25.6" height="10.6" fill="#1e3468"/>
<text x="776.6" y="65.0" font-family="'DejaVu Serif','Liberation Serif',serif" font-weight="bold" font-size="9.4" fill="#fff" textLength="23.2" lengthAdjust="spacingAndGlyphs">BOM</text>
<rect x="779" y="45.500" width="14" height="9" fill="#e0e2de"/>
<rect x="816" y="44.500" width="3.800" height="5.500" fill="#10c828" stroke="#707070" stroke-width="0.7"/><rect x="816" y="61" width="3.800" height="5.500" fill="#10c828" stroke="#707070" stroke-width="0.7"/>
<rect x="823" y="44.500" width="3.800" height="5.500" fill="#10c828" stroke="#707070" stroke-width="0.7"/><rect x="823" y="61" width="3.800" height="5.500" fill="#10c828" stroke="#707070" stroke-width="0.7"/>
<rect x="830" y="44.500" width="3.800" height="5.500" fill="#10c828" stroke="#707070" stroke-width="0.7"/><rect x="830" y="61" width="3.800" height="5.500" fill="#10c828" stroke="#707070" stroke-width="0.7"/>
<rect x="812.500" y="48.500" width="23" height="14" rx="1" fill="#fdfdfd" stroke="#4a4a4a" stroke-width="1.100"/><path d="M812.500 53.500 A1.800 1.800 0 0 1 812.500 57.500" fill="#ccc" stroke="#777" stroke-width="0.600"/>
<rect x="816" y="61.500" width="3.800" height="5" fill="#10c828" stroke="#707070" stroke-width="0.600"/>
<rect x="823" y="61.500" width="3.800" height="5" fill="#10c828" stroke="#707070" stroke-width="0.600"/>
<rect x="830" y="61.500" width="3.800" height="5" fill="#10c828" stroke="#707070" stroke-width="0.600"/>
<path d="M831.5 46.5 L829.5 49.0" stroke="#e8a0d8" stroke-width="5.0" stroke-linecap="round"/>
<path d="M829.5 49.0 L828.7 50.1" stroke="#b0b0b0" stroke-width="4.6"/>
<path d="M828.7 50.1 L818.9 62.8" stroke="#111" stroke-width="4.6"/>
<path d="M828.0 49.6 L818.1 62.3" stroke="#6a6a6a" stroke-width="1.5"/>
<path d="M817.0 61.4 L816.1 66.4 L820.7 64.2 Z" fill="#f0e080" stroke="#b8a020" stroke-width="0.5"/>
<path d="M816.4 64.6 L816.1 66.4 L817.7 65.6 Z" fill="#111"/>
<rect x="845.500" y="42.800" width="16.500" height="14.700" rx="0.800" fill="#ececec" stroke="#c4c4c4" stroke-width="0.800"/>
<path d="M849.500 44.500 V55 L858.500 49.700 Z M846.800 47.500 H849.500 M846.800 52 H849.500 M858.500 49.700 H861" fill="none" stroke="#e02020" stroke-width="1"/><path d="M851 47.800 H853 M851 51.500 H853 M852 50.500 V52.500" stroke="#e02020" stroke-width="0.700"/>
<rect x="854.500" y="50.500" width="16" height="16" rx="0.800" fill="#f0f0f0" stroke="#bdbdbd" stroke-width="0.800"/>
<rect x="860.500" y="52.500" width="4.500" height="12" rx="0.600" fill="#fafafa" stroke="#2a2a2a" stroke-width="1.100"/><path d="M861.700 52.800 H863.800 V54 H861.700 Z" fill="#555"/>
<rect x="856.800" y="53.3" width="2.200" height="2" fill="#10a820"/><rect x="866.800" y="53.3" width="2.200" height="2" fill="#10a820"/>
<rect x="856.800" y="56.3" width="2.200" height="2" fill="#10a820"/><rect x="866.800" y="56.3" width="2.200" height="2" fill="#10a820"/>
<rect x="856.800" y="59.3" width="2.200" height="2" fill="#10a820"/><rect x="866.800" y="59.3" width="2.200" height="2" fill="#10a820"/>
<rect x="856.800" y="62.3" width="2.200" height="2" fill="#10a820"/><rect x="866.800" y="62.3" width="2.200" height="2" fill="#10a820"/>
<path d="M880.500 43.500 H903.500 V61 L897 67 H880.500 Z" fill="#e8e8e8" stroke="#bcbcbc" stroke-width="0.900"/>
<path d="M883.500 47 V66 M886.500 49 V64 M886.500 49 Q886.500 46.500 889 46.500 Q891.500 46.500 891.500 49 V52 M889.500 52 V64 M893 52 V60 M893 50 Q893 46 897 46 H901" fill="none" stroke="#b4b4b4" stroke-width="1.300"/><rect x="896" y="48" width="5" height="14" fill="#b0b0b0"/>
<path d="M881.800 45 V66" stroke="#d0d0d0" stroke-width="1" stroke-dasharray="1 1"/>
<path d="M903.500 61 L897 67 L898 62 Z" fill="#f8f8f8" stroke="#c0c0c0" stroke-width="0.600"/>
<path d="M902.8 50.3 L900.8 52.8" stroke="#e8a0d8" stroke-width="4.0" stroke-linecap="round"/>
<path d="M900.8 52.8 L899.9 53.9" stroke="#b0b0b0" stroke-width="3.6"/>
<path d="M899.9 53.9 L895.2 59.9" stroke="#1a1a1a" stroke-width="3.6"/>
<path d="M899.4 53.5 L894.6 59.4" stroke="#6a6a6a" stroke-width="1.2"/>
<path d="M893.8 58.8 L892.4 63.4 L896.6 61.0 Z" fill="#f0e080" stroke="#b8a020" stroke-width="0.5"/>
<path d="M892.9 61.8 L892.4 63.4 L893.9 62.5 Z" fill="#111"/>
<path d="M918 42.500 H933 L939 48.500 V66 H919 Z" fill="#fafafa" stroke="#cfcfcf" stroke-width="0.800"/>
<path d="M913.500 51 L920.500 43.800 L923 46 L920 49.200 H928.500 V52.800 H920 L923 56 L920.500 58.200 Z" fill="#fff" stroke="#cacaca" stroke-width="0.900"/>
<text x="913" y="67.700" font-family="'Liberation Sans',sans-serif" font-weight="bold" font-size="11.2" fill="#4c4c4c" textLength="24.800" lengthAdjust="spacingAndGlyphs">BACK</text>
</svg>
<svg class="abs" style="left:0;top:0" width="1280" height="19" viewBox="0 0 1280 19">
<defs><linearGradient id="tbtn" x1="0" y1="0" x2="0" y2="1"><stop offset="0" stop-color="#4cb6f8"/><stop offset="1" stop-color="#72c2f6"/></linearGradient></defs>
<path d="M1.200 1.200 H16 V11.500 L11.500 16 H1.200 Z" fill="#fbfbfb" stroke="#d8e4ec" stroke-width="0.400"/>
<path d="M7.500 2.500 V14.500" stroke="#3050c0" stroke-width="0.700"/><path d="M7.500 2.600 H10.500 M7.500 8.300 H10 M2.500 11.400 H5" stroke="#d03030" stroke-width="0.800"/>
<ellipse cx="7.500" cy="5.300" rx="1.600" ry="2.100" fill="#6cc040"/><path d="M5.500 10 Q5 13.500 8 14.800" stroke="#6cc040" stroke-width="1.800" fill="none"/><rect x="3.300" y="4" width="1.800" height="1.800" fill="#c8c8c8"/>
<path d="M15.600 5 L9.600 11.800" stroke="#222" stroke-width="2.600"/><path d="M16.300 4.300 L15.300 5.400" stroke="#e890d8" stroke-width="2.800" stroke-linecap="round"/><path d="M9.800 11.500 L8 13.800" stroke="#e8d860" stroke-width="2.400"/>
<rect x="18.6" y="0.500" width="16" height="15.800" rx="2.200" fill="url(#tbtn)" stroke="#2a74a6" stroke-width="1"/>
<path d="M23 8.600 L26 5 L30.300 8.800" fill="none" stroke="#9a7a68" stroke-width="1.600" transform="translate(0.500,0.700)"/>
<path d="M22.600 8.400 L25.900 4.600 L30.200 8.400" fill="none" stroke="#fff" stroke-width="2" stroke-linejoin="miter"/>
<rect x="1227.4" y="0.500" width="16" height="15.800" rx="2.200" fill="url(#tbtn)" stroke="#2a74a6" stroke-width="1"/>
<rect x="1245.4" y="0.500" width="16" height="15.800" rx="2.200" fill="url(#tbtn)" stroke="#2a74a6" stroke-width="1"/>
<rect x="1263.4" y="0.500" width="18" height="15.800" rx="2.200" fill="url(#tbtn)" stroke="#2a74a6" stroke-width="1"/>
<g fill="none" stroke="#a89080" stroke-width="1.300" transform="translate(0.700,0.700)"><rect x="1234.600" y="4.800" width="5.600" height="4.800"/><rect x="1231.800" y="7.800" width="5.800" height="4.600"/></g>
<g fill="none" stroke="#fff" stroke-width="1.400"><path d="M1234.600 7.500 V4.800 H1240.200 V9.800 H1238"/><rect x="1231.800" y="7.900" width="5.800" height="4.500" fill="#5cbaf6"/></g>
<rect x="1249.700" y="11.700" width="9" height="1.900" fill="#a89080"/><rect x="1249" y="11" width="9" height="1.900" fill="#fff"/>
<path d="M1268.400 5.200 L1276.400 13.400 M1276.400 5.200 L1268.400 13.400" stroke="#a89080" stroke-width="1.800"/>
<path d="M1267.700 4.600 L1275.900 12.800 M1275.900 4.600 L1267.700 12.800" stroke="#fff" stroke-width="2.100"/>
</svg>
<svg class="abs" style="left:0;top:74px" width="36" height="220" viewBox="0 74 36 220">
<rect x="3.5" y="80.5" width="29" height="29" fill="#c6e2f6" stroke="#3daee9" stroke-width="1"/>
<circle cx="8.90" cy="86" r="1.350" fill="#1a1210"/>
<circle cx="8.90" cy="92" r="1.350" fill="#1a1210"/>
<circle cx="8.90" cy="98" r="1.350" fill="#1a1210"/>
<circle cx="8.90" cy="104" r="1.350" fill="#1a1210"/>
<circle cx="14.95" cy="86" r="1.350" fill="#1a1210"/>
<circle cx="14.95" cy="92" r="1.350" fill="#1a1210"/>
<circle cx="14.95" cy="98" r="1.350" fill="#1a1210"/>
<circle cx="14.95" cy="104" r="1.350" fill="#1a1210"/>
<circle cx="21.00" cy="86" r="1.350" fill="#1a1210"/>
<circle cx="21.00" cy="92" r="1.350" fill="#1a1210"/>
<circle cx="21.00" cy="98" r="1.350" fill="#1a1210"/>
<circle cx="21.00" cy="104" r="1.350" fill="#1a1210"/>
<circle cx="27.05" cy="86" r="1.350" fill="#1a1210"/>
<circle cx="27.05" cy="92" r="1.350" fill="#1a1210"/>
<circle cx="27.05" cy="98" r="1.350" fill="#1a1210"/>
<circle cx="27.05" cy="104" r="1.350" fill="#1a1210"/>
<text x="11.300" y="127.700" font-family="'Liberation Sans',sans-serif" font-weight="bold" font-size="15" fill="#262626" textLength="13.200" lengthAdjust="spacingAndGlyphs">In</text>
<path d="M8 133.5 H28" stroke="#2a3030" stroke-width="1.400"/><path d="M6 133.5 L13 130.8 L11.500 133.5 L13 136.2 Z M30 133.5 L23 130.8 L24.500 133.5 L23 136.2 Z" fill="#2a3030"/>
<rect x="3.5" y="144.5" width="29" height="29" fill="#c6e2f6" stroke="#3daee9" stroke-width="1"/>
<text x="5.600" y="158.600" font-family="'Liberation Sans',sans-serif" font-weight="bold" font-size="14" fill="#262626" textLength="24.600" lengthAdjust="spacingAndGlyphs">mm</text>
<path d="M8 165.6 H28" stroke="#2a3030" stroke-width="1.400"/><path d="M6 165.6 L13 162.9 L11.500 165.6 L13 168.29999999999998 Z M30 165.6 L23 162.9 L24.500 165.6 L23 168.29999999999998 Z" fill="#2a3030"/>
<path d="M6 187 H8 M20.500 187 H30 M14 179 V181 M14 193 V203" stroke="#848484" stroke-width="1.600"/>
<path d="M9 187 H19 M14 182.200 V191.800" stroke="#333" stroke-width="2.200"/>
<path d="M17.500 190 V201 L20 198.700 L22.300 203.300 L24.300 202.300 L22 197.800 L26 197.500 Z" fill="#fafafa" stroke="#8a8a8a" stroke-width="1" stroke-linejoin="round"/>
<rect x="3.5" y="208.5" width="29" height="29" fill="#c6e2f6" stroke="#3daee9" stroke-width="1"/>
<path d="M20.700 213.500 V232.500" stroke="#9a9a9a" stroke-width="1.600"/><circle cx="20.700" cy="212.600" r="1.400" fill="#ddd" stroke="#9a9a9a" stroke-width="1"/><circle cx="20.700" cy="233.600" r="1.400" fill="#ddd" stroke="#9a9a9a" stroke-width="1"/>
<path d="M10.200 212 V233.700 L25.600 222.800 Z" fill="#fbfbfb" stroke="#8b1a1a" stroke-width="1.900" stroke-linejoin="round"/><path d="M5.500 218.900 H10 M5.500 226.900 H10 M25.600 222.800 H30.400" stroke="#8b1a1a" stroke-width="1.900"/><path d="M12.200 220.500 H16.800 M12.200 225.500 H16.800 M14.500 223.200 V227.800" stroke="#8b1a1a" stroke-width="1.300"/>
<rect x="3.5" y="240.5" width="29" height="29" fill="#c6e2f6" stroke="#3daee9" stroke-width="1"/>
<path d="M12.400 243.600 V266.500 M6.300 261.400 H29.700" stroke="#151515" stroke-width="1.500" stroke-linecap="round"/><path d="M12.400 253.400 H19.500 V261.400" fill="none" stroke="#151515" stroke-width="1.300"/>
</svg>
<svg class="abs" style="left:1245px;top:76px" width="35" height="650" viewBox="1245 76 35 650">
<defs><linearGradient id="pg2" x1="0" y1="0" x2="1" y2="1"><stop offset="0" stop-color="#e8eaec"/><stop offset="0.5" stop-color="#fbfbfb"/><stop offset="1" stop-color="#e0e0e0"/></linearGradient>
<linearGradient id="cam" x1="0" y1="0" x2="1" y2="0"><stop offset="0" stop-color="#e4e4f4"/><stop offset="0.25" stop-color="#b4b0d8"/><stop offset="1" stop-color="#c8c4ec"/></linearGradient>
<linearGradient id="trash" x1="0" y1="0" x2="1" y2="0"><stop offset="0" stop-color="#a8aca8"/><stop offset="0.4" stop-color="#dcdedc"/><stop offset="1" stop-color="#9a9e9a"/></linearGradient></defs>
<path d="M1255.6 85.9 L1255.6 101.6 L1259.2 98.2 L1262.3 104.2 L1265.3 102.9 L1262.3 97.1 L1267.7 95.8 Z" fill="#f4f4f4" stroke="#6c6c6c" stroke-width="1.300" stroke-linejoin="round"/>
<path d="M1252.400 121.500 V136.800 H1256.300 M1252.400 127.800 H1256" fill="none" stroke="#3a3a3a" stroke-width="1.200"/>
<rect x="1250.5" y="115.5" width="23" height="6" rx="1.200" fill="#fafafa" stroke="#727272" stroke-width="1.100"/>
<rect x="1256.5" y="125.5" width="17" height="5" rx="1.200" fill="#fafafa" stroke="#727272" stroke-width="1.100"/>
<rect x="1256.5" y="134.5" width="17" height="5" rx="1.200" fill="#fafafa" stroke="#727272" stroke-width="1.100"/>
<path d="M1256.3 118.4 L1256.3 132.2 L1259.5 129.2 L1262.2 134.5 L1264.8 133.4 L1262.2 128.3 L1266.9 127.1 Z" fill="#eeeeee" stroke="#6c6c6c" stroke-width="1.300" stroke-linejoin="round"/>
<path d="M1254 148 V169.700 L1269.400 158.800 Z" fill="#f8f8f8" stroke="#8b1a1a" stroke-width="1.700" stroke-linejoin="round"/><path d="M1249.200 154.900 H1254 M1249.200 162.900 H1254 M1269.400 158.800 H1274.600" stroke="#8b1a1a" stroke-width="1.700"/><path d="M1256.200 156.300 H1261 M1256.200 161.600 H1261 M1258.600 159.200 V164" stroke="#8b1a1a" stroke-width="1.200"/>
<path d="M1261.900 181 V192 M1253 192 H1270.900 M1256.300 196 H1267.700 M1259.800 200 H1264" stroke="#800000" stroke-width="2" fill="none"/>
<rect x="1247.500" y="208.500" width="29" height="29" fill="#c6e2f6" stroke="#3daee9" stroke-width="1"/>
<path d="M1251 233.800 L1273 212" stroke="#008800" stroke-width="2.400" stroke-linecap="round"/>
<path d="M1251.800 265 L1272.500 244.800" stroke="#0000c8" stroke-width="4" stroke-linecap="round"/>
<path d="M1250 277.400 H1260.500 M1250 285.400 H1260.500" stroke="#9a9a9a" stroke-width="2.400"/><rect x="1270" y="274.200" width="4" height="25.600" fill="#9a9a9a"/>
<path d="M1261 277 L1271.700 284.700 M1261 285 L1271.700 292.600" stroke="#009000" stroke-width="2.400" stroke-linecap="round"/>
<path d="M1250 309.700 H1261 M1250 318.900 H1261" stroke="#9a9a9a" stroke-width="3.600"/><rect x="1270" y="306.100" width="4" height="25.800" fill="#9a9a9a"/>
<path d="M1262 309.600 L1272 316.900 M1262 318.900 L1272 326.300" stroke="#0000d0" stroke-width="4.200" stroke-linecap="round"/>
<path d="M1254.600 343.800 L1269.400 358.200 M1269.400 343.800 L1254.600 358.200" stroke="#0000c8" stroke-width="2" stroke-linecap="round"/>
<path d="M1250 383 H1262" stroke="#9a9a9a" stroke-width="2"/><path d="M1265.400 371.300 V394.500" stroke="#9a9a9a" stroke-width="2.600"/><circle cx="1265.400" cy="382.900" r="4.600" fill="#008000"/>
<text x="1262" y="418.900" font-family="'DejaVu Sans','Liberation Sans',sans-serif" font-size="18.800" fill="#0a0a0a" text-anchor="middle">A</text>
<path d="M1251.300 423.500 H1272.800" stroke="#009000" stroke-width="2.500" stroke-linecap="round"/>
<path d="M1250.500 440 H1263 L1269.500 447.300 L1263 454.800 H1250.500 Z" fill="#fff" stroke="#8b1a1a" stroke-width="1.500" stroke-linejoin="round"/><path d="M1270 447.300 H1274" stroke="#10a010" stroke-width="2.200" stroke-linecap="round"/>
<text x="1258" y="452.400" font-family="'DejaVu Sans','Liberation Sans',sans-serif" font-size="13.200" fill="#0a0a0a" text-anchor="middle">A</text>
<path d="M1249.6 467.5 Q1249.6 466.5 1250.6 466.5 H1273.1999999999998 Q1274.1999999999998 466.5 1274.1999999999998 467.5 V484.9 L1267.6999999999998 491.4 H1250.6 Q1249.6 491.4 1249.6 490.4 Z" fill="url(#pg2)" stroke="#8e8e8e" stroke-width="0.9"/>
<path d="M1274.1999999999998 484.9 L1267.6999999999998 491.4 L1268.6999999999998 486.4 Z" fill="#fff" stroke="#b0b0b0" stroke-width="0.6"/>
<text x="1255.200" y="483.900" font-family="'DejaVu Sans','Liberation Sans',sans-serif" font-size="13.800" fill="#0a0a0a" text-anchor="middle">A</text>
<path d="M1261 474.200 H1265.500 L1269.800 479 L1265.500 483.800 H1261 Z" fill="none" stroke="#b8960c" stroke-width="1.800" stroke-linejoin="round"/><path d="M1270.500 479 H1273.500" stroke="#10b020" stroke-width="2"/>
<rect x="1252" y="500.300" width="16.700" height="18.500" rx="0.800" fill="#f4f4f4" stroke="#9a9a9a" stroke-width="0.8"/><rect x="1254.400" y="502.400" width="16.700" height="18.200" rx="0.800" fill="#f6f6f6" stroke="#9a9a9a" stroke-width="0.8"/>
<path d="M1256.4 505.4 Q1256.4 504.4 1257.4 504.4 H1272.5 Q1273.5 504.4 1273.5 505.4 V517.0 L1268.0 522.5 H1257.4 Q1256.4 522.5 1256.4 521.5 Z" fill="url(#pg2)" stroke="#8e8e8e" stroke-width="0.9"/>
<path d="M1273.5 517.0 L1268.0 522.5 L1269.0 518.5 Z" fill="#fff" stroke="#b0b0b0" stroke-width="0.6"/>
<rect x="1249.600" y="530.500" width="19" height="20" rx="0.800" fill="#f2f2f2" stroke="#9a9a9a" stroke-width="0.8"/><rect x="1252.400" y="531.500" width="19" height="21" rx="0.800" fill="#f6f6f6" stroke="#9a9a9a" stroke-width="0.8"/>
<path d="M1255.2 534.5 Q1255.2 533.5 1256.2 533.5 H1273.6000000000001 Q1274.6000000000001 533.5 1274.6000000000001 534.5 V549.6 L1268.6000000000001 555.6 H1256.2 Q1255.2 555.6 1255.2 554.6 Z" fill="url(#pg2)" stroke="#8e8e8e" stroke-width="0.9"/>
<path d="M1274.6000000000001 549.6 L1268.6000000000001 555.6 L1269.6000000000001 551.1 Z" fill="#fff" stroke="#b0b0b0" stroke-width="0.6"/>
<text x="1260.300" y="542.600" font-family="'DejaVu Sans','Liberation Sans',sans-serif" font-size="10" fill="#0a0a0a" text-anchor="middle">A</text>
<path d="M1264.800 535.400 H1267.800 L1270.800 539.200 L1267.800 543.200 H1264.800 Z" fill="none" stroke="#b8960c" stroke-width="1.300" stroke-linejoin="round"/><path d="M1271.500 539.200 H1274" stroke="#10a020" stroke-width="1.200"/>
<path d="M1249.200 545.200 H1255.400 V542.100 L1264.400 549 L1255.400 556 V552.700 H1249.200 Z" fill="#4ea010"/>
<path d="M1249.6 563.4 Q1249.6 562.4 1250.6 562.4 H1273.3999999999999 Q1274.3999999999999 562.4 1274.3999999999999 563.4 V581.1 L1267.8999999999999 587.6 H1250.6 Q1249.6 587.6 1249.6 586.6 Z" fill="url(#pg2)" stroke="#8e8e8e" stroke-width="0.9"/>
<path d="M1274.3999999999999 581.1 L1267.8999999999999 587.6 L1268.8999999999999 582.6 Z" fill="#fff" stroke="#b0b0b0" stroke-width="0.6"/>
<path d="M1250.400 570 H1255.500 L1259.900 575 L1255.500 580 H1250.400 Z" fill="none" stroke="#b8960c" stroke-width="1.800" stroke-linejoin="round"/>
<text x="1266.200" y="579.700" font-family="'DejaVu Sans','Liberation Sans',sans-serif" font-size="13.400" fill="#0a0a0a" text-anchor="middle">A</text>
<path d="M1250.800 617.800 L1273.400 595.600" stroke="#0000e0" stroke-width="2.500" stroke-dasharray="3.300 2.200"/>
<text x="1262" y="648.800" font-family="'Liberation Serif','DejaVu Serif',serif" font-size="30" fill="#262626" stroke="#262626" stroke-width="0.500" text-anchor="middle">T</text>
<rect x="1252.500" y="660.800" width="5" height="2" rx="0.800" fill="#8884b8"/>
<rect x="1249.500" y="662.300" width="25.200" height="18.200" rx="1" fill="url(#cam)" stroke="#8a88b8" stroke-width="0.9"/>
<rect x="1267.500" y="663.500" width="6" height="2.200" fill="#b0d4f4"/>
<circle cx="1265.200" cy="672.200" r="8" fill="#f6f6fa" stroke="#dcdcea" stroke-width="0.6"/><circle cx="1265.200" cy="672.200" r="4" fill="#c8c8cc" stroke="#8c8c90" stroke-width="0.8"/><circle cx="1265.200" cy="672.200" r="2" fill="#080808"/>
<circle cx="1261.500" cy="665" r="1.200" fill="#2060e0"/><rect x="1264" y="664.800" width="2.200" height="1.400" fill="#111"/>
<ellipse cx="1262" cy="712.500" rx="9" ry="2" fill="#000" opacity="0.08"/>
<path d="M1253.800 699 L1254.700 711.500 Q1262 714.800 1269.200 711.500 L1270 699 Z" fill="url(#trash)" stroke="#a8aca8" stroke-width="0.6"/>
<path d="M1257 701 V711.500 M1260 701.500 V712.500 M1263 701.500 V712.500 M1266 701 V711.500" stroke="#a0a4a0" stroke-width="0.9"/>
<ellipse cx="1261.900" cy="697.100" rx="8.900" ry="3.500" fill="#e4e6e4" stroke="#b4b8b4" stroke-width="0.8"/><path d="M1259.500 695.500 Q1261.900 691.500 1264.300 695.500" fill="#eee" stroke="#b8bcb8" stroke-width="0.8"/>
</svg>
<svg class="abs" style="left:38px;top:76px" width="1206" height="901" viewBox="38 76 1206 901" fill="none" stroke="#202020" stroke-width="1.500" stroke-linecap="round" stroke-linejoin="round">
<path d="M1230.500 82.500 L1234.700 78.600 L1238.900 82.500"/>
<path d="M1230.500 944 L1234.700 940 L1238.900 944"/><path d="M1230.500 952.500 L1234.700 956.700 L1238.900 952.500"/>
<path d="M44.800 964.400 L40.300 968.500 L44.800 972.600"/>
<path d="M1209.500 964.400 L1205 968.500 L1209.500 972.600"/><path d="M1217.600 964.400 L1222.100 968.500 L1217.600 972.600"/>
</svg>
</body></html>
